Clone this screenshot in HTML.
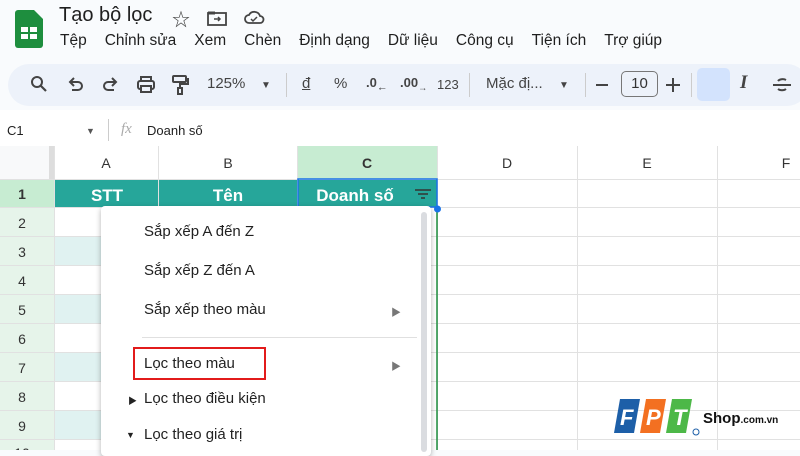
<!DOCTYPE html><html><head><meta charset="utf-8"><style>
*{margin:0;padding:0;box-sizing:border-box}
body{width:800px;height:450px;overflow:hidden;background:#f9fbfd;font-family:"Liberation Sans","Noto Sans CJK SC",sans-serif;position:relative;color:#1f1f1f}
.a{position:absolute}
.menu span{margin-right:18px}
.tb{position:absolute;top:64px;left:8px;width:800px;height:42px;background:#edf2fa;border-radius:21px}
.t{position:absolute;top:75px;font-size:15px;color:#444}
</style></head><body>
<svg class="a" style="left:15px;top:10px" width="28" height="38" viewBox="0 0 28 38"><path d="M3 0h16l9 9v26a3 3 0 0 1-3 3H3a3 3 0 0 1-3-3V3a3 3 0 0 1 3-3z" fill="#1e8e3e"/><rect x="6" y="17" width="16" height="12" fill="#fff"/><path d="M6 23h16M14 17v12" stroke="#1e8e3e" stroke-width="2"/></svg>
<div class="a" style="left:59px;top:4px;font-size:20px">Tạo bộ lọc</div>
<div class="a" style="left:172px;top:6px;font-size:18px;color:#444">☆</div>
<svg class="a" style="left:207px;top:10px" width="20" height="16"><rect x="1" y="3" width="18" height="12" fill="none" stroke="#444" stroke-width="1.8"/><path d="M1 3h7" stroke="#444" stroke-width="3"/><path d="M7 9h6M11 7l2 2-2 2" stroke="#444" stroke-width="1.5" fill="none"/></svg>
<svg class="a" style="left:243px;top:9px" width="22" height="16"><path d="M6 14a4 4 0 0 1 0-8 6 6 0 0 1 11 1 3.5 3.5 0 0 1 0 7z" fill="none" stroke="#444" stroke-width="1.8"/><path d="M8 10l2 2 4-4" stroke="#444" stroke-width="1.5" fill="none"/></svg>
<div class="a menu" style="left:60px;top:32px;font-size:15.5px;white-space:nowrap"><span>Tệp</span><span>Chỉnh sửa</span><span>Xem</span><span>Chèn</span><span>Định dạng</span><span>Dữ liệu</span><span>Công cụ</span><span>Tiện ích</span><span>Trợ giúp</span></div>
<div class="tb"></div>
<svg class="a" style="left:30px;top:75px" width="18" height="18"><circle cx="7" cy="7" r="5" fill="none" stroke="#444" stroke-width="2"/><path d="M11 11l5 5" stroke="#444" stroke-width="2.2"/></svg>
<svg class="a" style="left:67px;top:77px" width="18" height="16"><path d="M4 5h7a4 4 0 0 1 0 8H5" fill="none" stroke="#444" stroke-width="2"/><path d="M7 1L3 5l4 4" fill="none" stroke="#444" stroke-width="2"/></svg>
<svg class="a" style="left:101px;top:77px" width="18" height="16"><path d="M14 5H7a4 4 0 0 0 0 8h6" fill="none" stroke="#444" stroke-width="2"/><path d="M11 1l4 4-4 4" fill="none" stroke="#444" stroke-width="2"/></svg>
<svg class="a" style="left:136px;top:76px" width="20" height="18"><rect x="2" y="5" width="16" height="8" rx="2" fill="none" stroke="#444" stroke-width="2"/><rect x="5" y="1" width="10" height="4" fill="none" stroke="#444" stroke-width="2"/><rect x="5" y="10" width="10" height="6" fill="#edf2fa" stroke="#444" stroke-width="2"/></svg>
<svg class="a" style="left:171px;top:75px" width="18" height="20"><rect x="2" y="1" width="13" height="6" rx="1" fill="none" stroke="#444" stroke-width="2"/><path d="M15 4h2v5H9v4" stroke="#444" stroke-width="2" fill="none"/><rect x="7" y="13" width="4" height="6" fill="none" stroke="#444" stroke-width="2"/></svg>
<div class="t" style="left:207px">125%</div>
<div class="t" style="left:261px;font-size:10px;top:80px">▼</div>
<div class="a" style="left:286px;top:73px;width:1px;height:24px;background:#ccc"></div>
<div class="t" style="left:302px;text-decoration:underline">đ</div>
<div class="t" style="left:334px">%</div>
<div class="t" style="left:366px;font-size:13px;font-weight:bold">.0<sub>←</sub></div>
<div class="t" style="left:400px;font-size:13px;font-weight:bold">.00<sub style="font-size:9px">→</sub></div>
<div class="t" style="left:437px;font-size:13px;top:77px">123</div>
<div class="a" style="left:469px;top:73px;width:1px;height:24px;background:#ccc"></div>
<div class="t" style="left:486px">Mặc đị...</div>
<div class="t" style="left:559px;font-size:10px;top:80px">▼</div>
<div class="a" style="left:585px;top:73px;width:1px;height:24px;background:#ccc"></div>
<div class="a" style="left:596px;top:84px;width:12px;height:2px;background:#444"></div>
<div class="a" style="left:621px;top:71px;width:37px;height:26px;border:1px solid #777;border-radius:5px;text-align:center;font-size:15px;line-height:24px;color:#333">10</div>
<svg class="a" style="left:666px;top:78px" width="14" height="14"><path d="M7 0v14M0 7h14" stroke="#444" stroke-width="2"/></svg>
<div class="a" style="left:691px;top:73px;width:1px;height:24px;background:#ccc"></div>
<div class="a" style="left:697px;top:68px;width:33px;height:33px;background:#d3e3fd;border-radius:5px"></div>
<div class="t" style="left:740px;font-size:19px;font-style:italic;font-family:'Liberation Serif',serif;font-weight:bold;top:72px">I</div>
<svg class="a" style="left:772px;top:76px" width="20" height="18"><path d="M14 4a5 3 0 0 0-8 1M6 13a5 3 0 0 0 8 0" fill="none" stroke="#444" stroke-width="2"/><path d="M1 9h18" stroke="#444" stroke-width="2"/></svg>
<div class="a" style="left:0;top:110px;width:800px;height:37px;background:#fff"></div>
<div class="a" style="left:7px;top:123px;font-size:13px">C1</div>
<div class="a" style="left:86px;top:126px;font-size:9px;color:#555">▼</div>
<div class="a" style="left:108px;top:119px;width:1px;height:22px;background:#ccc"></div>
<div class="a" style="left:121px;top:121px;font-size:15px;color:#aaa;font-style:italic;font-family:'Liberation Serif',serif">fx</div>
<div class="a" style="left:147px;top:123px;font-size:13px">Doanh số</div>
<svg class="a" style="left:0;top:146px" width="800" height="304">
<rect width="800" height="304" fill="#fff"/>
<rect x="0" y="0" width="54" height="33" fill="#f8f9fa"/>
<rect x="297" y="0" width="140" height="33" fill="#c7ecd2"/>
<rect x="0" y="33" width="54" height="271" fill="#e6f4ea"/>
<rect x="0" y="33" width="54" height="29" fill="#c7ecd2"/>
<rect x="54" y="33" width="383" height="29" fill="#26a69a"/>
<g fill="#e0f2f1"><rect x="54" y="91" width="104" height="29"/><rect x="54" y="149" width="104" height="29"/><rect x="54" y="207" width="104" height="29"/><rect x="54" y="264" width="104" height="29"/></g>
<g stroke="#e1e1e1" stroke-width="1">
<path d="M0 33.5H800M0 61.5H800M0 90.5H800M0 119.5H800M0 148.5H800M0 177.5H800M0 206.5H800M0 235.5H800M0 264.5H800M0 293.5H800"/>
<path d="M54.5 0V304M158.5 0V304M297.5 0V304M437.5 0V304M577.5 0V304M717.5 0V304"/>
</g>
<rect x="49" y="0" width="5" height="33" fill="#ddd"/>
<rect x="298" y="33" width="139" height="28" fill="none" stroke="#1a73e8" stroke-width="1.5"/>
<path d="M437 62V304" stroke="#1e8e3e" stroke-width="1.5"/>
<circle cx="437.5" cy="63" r="3.5" fill="#1a73e8"/>
<g font-size="14" fill="#333" text-anchor="middle"><text x="106" y="22">A</text><text x="228" y="22">B</text><text x="367" y="22" font-weight="bold">C</text><text x="507" y="22">D</text><text x="647" y="22">E</text><text x="786" y="22">F</text>
<text x="22" y="53" font-weight="bold">1</text><text x="22" y="82">2</text><text x="22" y="111">3</text><text x="22" y="140">4</text><text x="22" y="169">5</text><text x="22" y="198">6</text><text x="22" y="227">7</text><text x="22" y="256">8</text><text x="22" y="285">9</text><text x="22" y="312">10</text></g>
<g font-size="17" fill="#fff" font-weight="bold" text-anchor="middle"><text x="107" y="55">STT</text><text x="228" y="55">Tên</text><text x="355" y="55">Doanh số</text></g>
<path d="M415 44h16M418 48h10M421 52h4" stroke="#333" stroke-width="1.6"/>
</svg>
<div class="a" style="left:101px;top:206px;width:330px;height:250px;background:#fff;border-radius:4px;box-shadow:0 2px 6px rgba(0,0,0,.3)"></div>
<div class="a" style="left:421px;top:212px;width:6px;height:240px;background:#dadce0;border-radius:3px"></div>
<div class="a" style="left:142px;top:337px;width:275px;height:1px;background:#e0e0e0"></div>
<div class="a" style="left:133px;top:347px;width:133px;height:33px;border:2px solid #e21b1b"></div>
<div style="font-size:15px;color:#222">
<div class="a" style="left:144px;top:223px">Sắp xếp A đến Z</div>
<div class="a" style="left:144px;top:262px">Sắp xếp Z đến A</div>
<div class="a" style="left:144px;top:301px">Sắp xếp theo màu</div>
<div class="a" style="left:144px;top:355px">Lọc theo màu</div>
<div class="a" style="left:144px;top:390px">Lọc theo điều kiện</div>
<div class="a" style="left:144px;top:426px">Lọc theo giá trị</div>
<div class="a" style="left:391px;top:304px;font-size:10px;color:#777">▶</div>
<div class="a" style="left:391px;top:358px;font-size:10px;color:#777">▶</div>
<div class="a" style="left:128px;top:394px;font-size:9px">▶</div>
<div class="a" style="left:126px;top:430px;font-size:9px">▼</div>
</div>
<svg class="a" style="left:612px;top:397px" width="90" height="40">
<path d="M8 2h20l-6 34H2z" fill="#1d5fa8"/><path d="M34 2h20l-6 34H28z" fill="#f37021"/><path d="M60 2h20l-6 34H54z" fill="#4db848"/>
<g font-size="22" font-weight="bold" fill="#fff" font-style="italic"><text x="8" y="28">F</text><text x="34" y="28">P</text><text x="61" y="28">T</text></g>
<circle cx="84" cy="35" r="3" fill="none" stroke="#1d5fa8"/>
</svg>
<div class="a" style="left:703px;top:410px;font-size:15px;font-weight:bold;color:#111">Shop<span style="font-size:10px">.com.vn</span></div>
</body></html>
